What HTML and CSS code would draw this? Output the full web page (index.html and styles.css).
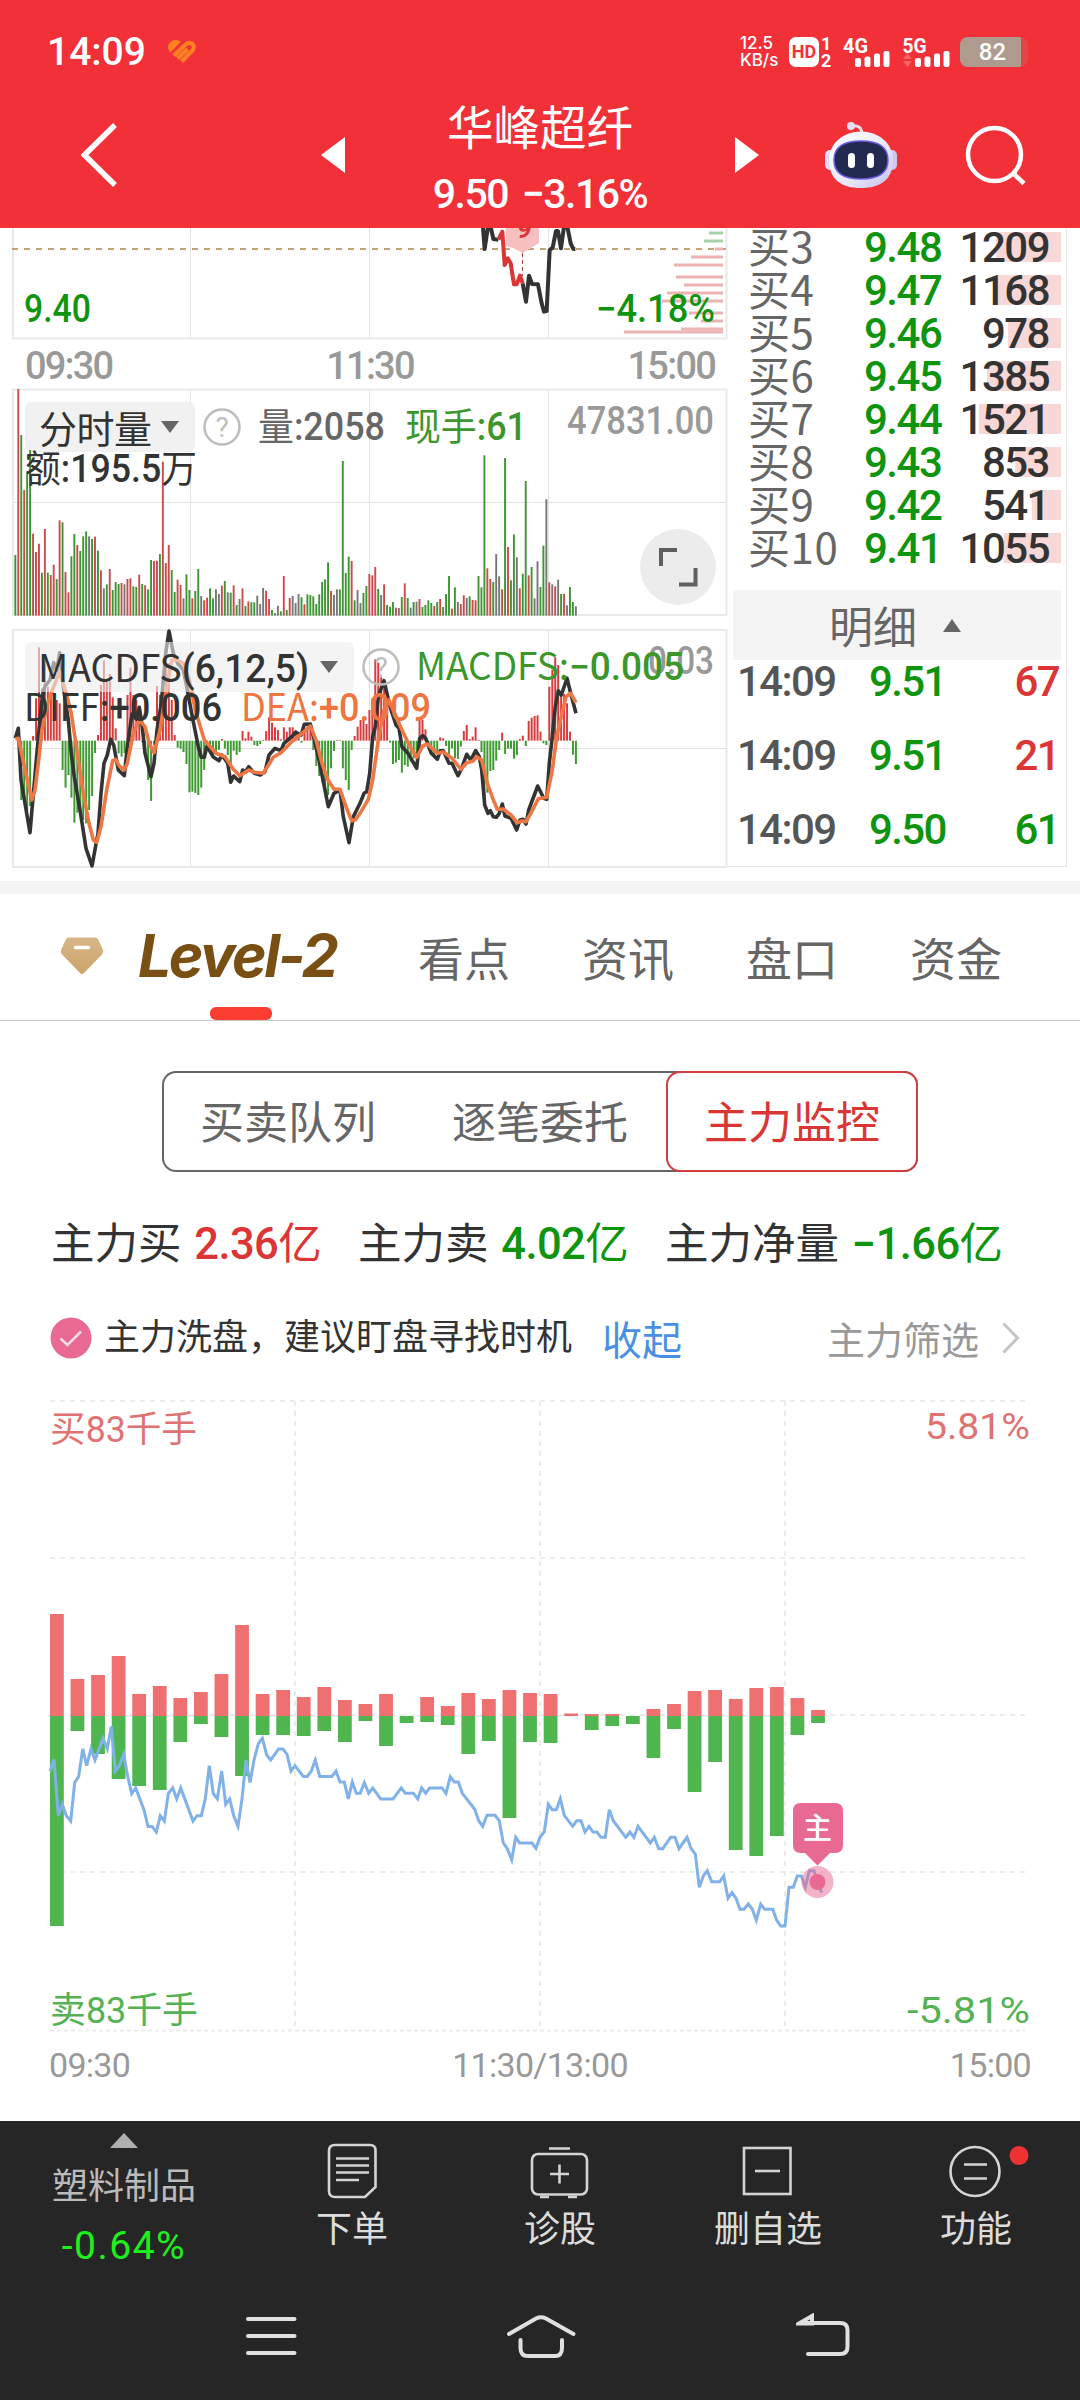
FILE: index.html
```html
<!DOCTYPE html>
<html lang="zh-CN">
<head>
    <meta charset="UTF-8">
    <meta name="viewport" content="width=device-width, initial-scale=1.0">
    <title>华峰超纤</title>
    <link rel="stylesheet" href="styles.css">
</head>
<body>
    <header class="header">
        <div class="status-bar">
            <span class="status-time">14:09</span>
            <svg class="status-heart" width="28" height="24" viewBox="0 0 28 24">
                <path d="M2.500 12.500 Q0 10 0 7 Q1 0 8 0 Q11 0 13 1.500 Z" fill="#ff8222"/>
                <path d="M6 15.500 L17.500 4.500 Q21 1.500 24.500 4 Q27 7 24.500 10.500 L13.500 21.500 M9.500 18.500 L19.500 9" fill="none" stroke="#ff8222" stroke-width="4.200"/>
            </svg>
            <div class="status-right">
                <div class="net-speed">12.5<br>KB/s</div>
                <span class="hd-badge">HD</span>
                <div class="hd-sims">1<br>2</div>
                <svg class="signal" width="50" height="32" viewBox="842 35 50 32">
                    <text x="843" y="51.500" textLength="25" lengthAdjust="spacingAndGlyphs">4G</text>
                    <rect x="855" y="57" width="6" height="9" rx="2"/>
                    <rect x="864.500" y="55.500" width="6" height="10.500" rx="2"/>
                    <rect x="874" y="52.500" width="6" height="13.500" rx="2"/>
                    <rect x="883.500" y="50" width="6" height="16" rx="2"/>
                </svg>
                <svg class="signal" width="50" height="32" viewBox="902 35 50 32">
                    <text x="902.500" y="51.500" textLength="24" lengthAdjust="spacingAndGlyphs">5G</text>
                    <path d="M903 58 h9 l-4.500 -6 z M903 60 h9 l-4.500 6 z" fill-opacity="0.25"/>
                    <rect x="915" y="57" width="6" height="9" rx="2"/>
                    <rect x="924.500" y="55.500" width="6" height="10.500" rx="2"/>
                    <rect x="934" y="52.500" width="6" height="13.500" rx="2"/>
                    <rect x="943.500" y="50" width="6" height="16" rx="2"/>
                </svg>
                <div class="battery"><span class="battery-level">82</span></div>
            </div>
        </div>
        <div class="title-bar">
            <svg class="title-icon icon-back" width="36" height="64" viewBox="81 122 36 64" fill="none" stroke="#fff" stroke-width="5.500">
                <path d="M115 124 L84.500 154 L115 184"/>
            </svg>
            <svg class="title-icon icon-prev" width="24" height="36" viewBox="0 0 24 36"><path d="M24 0 V36 L0 18 Z" fill="#fff"/></svg>
            <div class="title-text">
                <div class="stock-name">华峰超纤</div>
                <div class="stock-price">9.50 −3.16%</div>
            </div>
            <svg class="title-icon" width="24" height="36" viewBox="0 0 24 36"><path d="M0 0 V36 L24 18 Z" fill="#fff"/></svg>
            <svg class="title-icon icon-robot" width="72" height="68" viewBox="825 119 72 68">
                <defs>
                    <linearGradient id="shell" x1="0" y1="0" x2="1" y2="1">
                        <stop offset="0" stop-color="#ffffff"/>
                        <stop offset="0.600" stop-color="#e8e8fb"/>
                        <stop offset="1" stop-color="#c3bdea"/>
                    </linearGradient>
                </defs>
                <path d="M851 124 Q862 122 862 133" fill="none" stroke="#f3d9e6" stroke-width="3"/>
                <circle cx="851" cy="124" r="4" fill="#e9def0"/>
                <rect x="825" y="148" width="12" height="20" rx="5" fill="#dcdcf6"/>
                <rect x="885" y="148" width="12" height="20" rx="5" fill="#cfc8ee"/>
                <path d="M861 129.500 C878 129.500 893 141 893 158 C893 178 880 186 861 186 C842 186 829 178 829 158 C829 141 844 129.500 861 129.500 Z" fill="url(#shell)"/>
                <path d="M861 139 C880 139 888 146 888 158 C888 171 878 177 861 177 C844 177 834 171 834 158 C834 146 842 139 861 139 Z" fill="#232a50" stroke="#6a5be0" stroke-width="1.500"/>
                <rect x="848" y="151" width="7" height="15" rx="3.500" fill="#fff"/>
                <rect x="867" y="151" width="7" height="15" rx="3.500" fill="#fff"/>
            </svg>
            <svg class="title-icon icon-search" width="62" height="62" viewBox="964 124 62 62" fill="none" stroke="#fff" stroke-width="4.500">
                <circle cx="994.500" cy="154.500" r="26.500"/>
                <path d="M1013 173 L1024 183.500"/>
            </svg>
        </div>
    </header>

    <section class="quote">
        <div class="charts">
            <svg class="chart" width="728" height="113" viewBox="0 228 728 113">
                <path class="grid-strong" d="M13 228 V338.500 H726.500 V228"/>
                <path class="grid" d="M190.500 228 V338 M369.500 228 V338 M548.500 228 V338"/>
                <path class="avg-line" d="M12 249 H727"/>
                <g id="chips"></g>
                <path d="M505.500 228 V246 L514 248.500 L522.500 253 L530 248.500 L539 243 V228 Z" fill="#f7c0c0"/>
                <text class="flag" x="517" y="238">9</text>
                <path d="M522.500 253 V276" stroke="#b04040" stroke-dasharray="4 3"/>
                <g class="price-line" transform="translate(360 225) scale(0.33333)">
                    <polyline points="368,-5 374,72 384,5 392,5 400,42 415,44"/>
                    <polyline points="488,175 498,230 507,152 516,177 534,178 545,235 552,260 560,258 569,75 578,68 588,18 594,18 603,70 612,5 622,5 632,55 640,72 646,72"/>
                    <polyline class="price-red" points="415,44 427,20 434,120 443,100 452,115 462,178 470,178 480,152 488,175"/>
                </g>
                <text class="num green" x="24" y="322" textLength="67" lengthAdjust="spacingAndGlyphs">9.40</text>
                <text class="num green" x="596" y="322" textLength="119" lengthAdjust="spacingAndGlyphs">−4.18%</text>
            </svg>
            <div class="time-axis">
                <span>09:30</span>
                <span>11:30</span>
                <span>15:00</span>
            </div>
            <svg class="chart" width="728" height="234" viewBox="0 386 728 234">
                <path class="grid-strong" d="M13 389.500 H726.500 V615 H13 Z"/>
                <path class="grid" d="M190.500 390 V615 M369.500 390 V615 M548.500 390 V615 M13 502.500 H726"/>
                <rect class="selector" x="25" y="402" width="170" height="50" rx="6"/>
                <g id="volume"></g>
                <text class="cjk dark" x="39" y="443" textLength="113">分时量</text>
                <path class="caret" d="M161 421 H179 L170 433 Z"/>
                <circle class="help" cx="222" cy="427" r="17.500"/>
                <text class="help-mark" x="222" y="437">?</text>
                <text class="cjk gray" x="258" y="440" textLength="127" lengthAdjust="spacingAndGlyphs">量<tspan class="num">:2058</tspan></text>
                <text class="cjk leaf" x="405" y="440" textLength="122" lengthAdjust="spacingAndGlyphs">现手<tspan class="num">:61</tspan></text>
                <text class="num muted" x="567" y="434" textLength="147" lengthAdjust="spacingAndGlyphs">47831.00</text>
                <text class="cjk dark" x="25" y="482" textLength="172" lengthAdjust="spacingAndGlyphs">额<tspan class="num">:195.5</tspan>万</text>
                <circle cx="678" cy="567" r="38" fill="#ececec"/>
                <path d="M677 550 H661 V566 M679 584.500 H695.500 V568" fill="none" stroke="#5f5f5f" stroke-width="4"/>
            </svg>
            <svg class="chart" width="728" height="261" viewBox="0 620 728 261">
                <path class="grid-strong" d="M13 630 H726.500 V867 H13 Z"/>
                <path class="grid" d="M190.500 630 V867 M369.500 630 V867 M548.500 630 V867 M13 748.500 H726"/>
                <g id="macd"></g>
                <polyline id="diff" class="diff-line"/>
                <polyline id="dea" class="dea-line"/>
                <rect class="selector selector-over" x="25" y="642" width="329" height="50" rx="6"/>
                <text class="cjk dark" x="38" y="682" textLength="271" lengthAdjust="spacingAndGlyphs">MACDFS<tspan class="num">(6,12,5)</tspan></text>
                <path class="caret" d="M320 661 H338 L329 673 Z"/>
                <circle class="help" cx="381" cy="667" r="17.500"/>
                <text class="help-mark" x="381" y="677">?</text>
                <text class="num muted" x="648" y="674" textLength="66" lengthAdjust="spacingAndGlyphs">0.03</text>
                <text class="cjk leaf" x="416" y="680" textLength="268" lengthAdjust="spacingAndGlyphs">MACDFS:<tspan class="num">−0.005</tspan></text>
                <text class="cjk dark" x="24" y="721" textLength="198" lengthAdjust="spacingAndGlyphs">DIFF:<tspan class="num">+0.006</tspan></text>
                <text class="cjk orange" x="241" y="721" textLength="190" lengthAdjust="spacingAndGlyphs">DEA:<tspan class="num">+0.009</tspan></text>
            </svg>
        </div>

        <aside class="book">
            <div class="book-rows">
                <div class="book-row"><span class="level">买3</span><span class="price">9.48</span><span class="qty"><i class="depth" style="width: 65px"></i><b>1209</b></span></div>
                <div class="book-row"><span class="level">买4</span><span class="price">9.47</span><span class="qty"><i class="depth" style="width: 63px"></i><b>1168</b></span></div>
                <div class="book-row"><span class="level">买5</span><span class="price">9.46</span><span class="qty"><i class="depth" style="width: 53px"></i><b>978</b></span></div>
                <div class="book-row"><span class="level">买6</span><span class="price">9.45</span><span class="qty"><i class="depth" style="width: 74px"></i><b>1385</b></span></div>
                <div class="book-row"><span class="level">买7</span><span class="price">9.44</span><span class="qty"><i class="depth" style="width: 82px"></i><b>1521</b></span></div>
                <div class="book-row"><span class="level">买8</span><span class="price">9.43</span><span class="qty"><i class="depth" style="width: 46px"></i><b>853</b></span></div>
                <div class="book-row"><span class="level">买9</span><span class="price">9.42</span><span class="qty"><i class="depth" style="width: 29px"></i><b>541</b></span></div>
                <div class="book-row"><span class="level">买10</span><span class="price">9.41</span><span class="qty"><i class="depth" style="width: 57px"></i><b>1055</b></span></div>
            </div>
            <div class="detail-head">
                <span>明细</span>
                <svg width="18" height="13" viewBox="0 0 18 13"><path d="M9 0 L18 13 H0 Z" fill="#666"/></svg>
            </div>
            <div class="trades">
                <div class="trade"><span class="trade-time">14:09</span><span class="trade-price">9.51</span><span class="trade-qty up">67</span></div>
                <div class="trade"><span class="trade-time">14:09</span><span class="trade-price">9.51</span><span class="trade-qty up">21</span></div>
                <div class="trade"><span class="trade-time">14:09</span><span class="trade-price">9.50</span><span class="trade-qty down">61</span></div>
            </div>
        </aside>
    </section>

    <nav class="tabs">
        <svg class="gem" width="44" height="38" viewBox="0 0 44 38">
            <defs>
                <linearGradient id="gold" x1="0" y1="0" x2="0" y2="1">
                    <stop offset="0" stop-color="#d6b689"/>
                    <stop offset="1" stop-color="#cda469"/>
                </linearGradient>
            </defs>
            <path d="M9 0.500 H35 Q37 0.500 38 2 L42.500 12 Q44 15 42 17.500 L24 36 Q22 38 20 36 L2 17.500 Q0 15 1.500 12 L6 2 Q7 0.500 9 0.500 Z" fill="url(#gold)"/>
            <path d="M15.500 10.500 H28.500" stroke="#fff" stroke-width="3.500" stroke-linecap="round"/>
        </svg>
        <div class="tab tab-level2">Level-2</div>
        <div class="tab">看点</div>
        <div class="tab">资讯</div>
        <div class="tab">盘口</div>
        <div class="tab">资金</div>
    </nav>

    <main class="monitor">
        <div class="segments">
            <button class="segment">买卖队列</button>
            <button class="segment">逐笔委托</button>
            <button class="segment active">主力监控</button>
        </div>

        <div class="totals">
            <span class="total">主力买 <b class="up">2.36<em>亿</em></b></span>
            <span class="total">主力卖 <b class="down">4.02<em>亿</em></b></span>
            <span class="total">主力净量 <b class="down">−1.66<em>亿</em></b></span>
        </div>

        <div class="notice">
            <svg class="notice-icon" width="42" height="42" viewBox="0 0 42 42">
                <circle cx="21" cy="21" r="20.500" fill="#e86a92"/>
                <path d="M10.500 21.500 L17.500 28 L31 14.500" fill="none" stroke="#fbdbe6" stroke-width="2.500"/>
            </svg>
            <span class="notice-text">主力洗盘，建议盯盘寻找时机</span>
            <a class="notice-fold" href="#">收起</a>
            <a class="notice-filter" href="#">主力筛选</a>
            <svg width="18" height="32" viewBox="0 0 18 32" fill="none" stroke="#c4c4c4" stroke-width="3"><path d="M1.500 1.500 L15.500 16 L1.500 30.500"/></svg>
        </div>

        <svg class="flow-chart" width="1080" height="645" viewBox="0 1393 1080 645">
            <path class="flow-grid" d="M50 1401 H1025 M50 1558 H1025 M50 1715 H1025 M50 1872 H1025 M295 1401 V2030 M540 1401 V2030 M785 1401 V2030"/>
            <path class="flow-grid flow-grid-fine" d="M50 2030.500 H1025"/>
            <g id="flow"></g>
            <polyline id="trend" class="trend-line"/>
            <circle cx="817.500" cy="1882" r="16" fill="#e86a92" fill-opacity="0.500"/>
            <circle cx="817.500" cy="1882" r="8" fill="#e86a92"/>
            <path d="M801 1803 H835 Q843 1803 843 1811 V1845 Q843 1853 835 1853 H830 L817.500 1865.500 L805 1853 H801 Q793 1853 793 1845 V1811 Q793 1803 801 1803 Z" fill="#e86a92"/>
            <text class="marker-text" x="817.500" y="1839">主</text>
            <text class="flow-label flow-buy" x="50" y="1442" textLength="147" lengthAdjust="spacingAndGlyphs">买83千手</text>
            <text class="flow-label flow-buy" x="925" y="1439" textLength="105" lengthAdjust="spacingAndGlyphs">5.81%</text>
            <text class="flow-label flow-sell" x="50" y="2023" textLength="148" lengthAdjust="spacingAndGlyphs">卖83千手</text>
            <text class="flow-label flow-sell" x="907" y="2023" textLength="123" lengthAdjust="spacingAndGlyphs">-5.81%</text>
        </svg>
        <div class="flow-axis">
            <span>09:30</span>
            <span>11:30/13:00</span>
            <span>15:00</span>
        </div>
    </main>

    <footer class="footer">
        <div class="toolbar">
            <div class="tool tool-sector">
                <svg width="28" height="15" viewBox="0 0 28 15"><path d="M14 0 L28 15 H0 Z" fill="#b0b0b0"/></svg>
                <span class="sector-name">塑料制品</span>
                <span class="sector-change">-0.64%</span>
            </div>
            <div class="tool">
                <svg class="tool-icon" width="60" height="60" viewBox="322 2141 60 60">
                    <path d="M335 2145 H370 Q375.500 2145 375.500 2150.500 V2187 L365 2197 H335 Q329 2197 329 2191 V2151 Q329 2145 335 2145 Z"/>
                    <path d="M336 2158.500 H369 M336 2165.500 H369 M336 2172.500 H369 M336 2180 H359"/>
                </svg>
                <span>下单</span>
            </div>
            <div class="tool">
                <svg class="tool-icon" width="60" height="60" viewBox="530 2141 60 60">
                    <rect x="532" y="2154" width="55" height="40.500" rx="6"/>
                    <path d="M549 2148.500 H570 M540 2197 H549 M568 2197 H577 M550 2174 H569 M559.500 2164.500 V2183.500"/>
                </svg>
                <span>诊股</span>
            </div>
            <div class="tool">
                <svg class="tool-icon" width="60" height="60" viewBox="738 2141 60 60">
                    <rect x="744" y="2148" width="46.500" height="46"/>
                    <path d="M755 2171 H780"/>
                </svg>
                <span>删自选</span>
            </div>
            <div class="tool">
                <svg class="tool-icon" width="116" height="60" viewBox="918 2141 116 60">
                    <circle cx="975" cy="2171.500" r="24.500"/>
                    <path d="M964 2164.500 H987 M964 2178.500 H987"/>
                    <circle cx="1019" cy="2155.500" r="9.500" fill="#ec3232" stroke="none"/>
                </svg>
                <span>功能</span>
            </div>
        </div>
        <div class="system-nav">
            <svg width="54" height="44" viewBox="244 2315 54 44"><path d="M248 2320 H294.500 M248 2337 H294.500 M248 2354 H294.500"/></svg>
            <svg width="72" height="48" viewBox="505 2312 72 48"><path d="M509 2334 L536 2318.500 Q541 2316 546 2318.500 L573.500 2334 M520.500 2340 V2348 Q520.500 2356 528 2356 H555 Q562 2356 562 2348 V2340"/></svg>
            <svg width="56" height="46" viewBox="796 2313 56 46"><path d="M802 2323 H840 Q847.500 2323 847.500 2330 V2347 Q847.500 2354 840 2354 H808"/><path d="M799 2323.500 L812 2316 V2323.500 Z" fill="#e0e0e0" stroke-width="1"/></svg>
        </div>
    </footer>

    <script src="charts.js"></script>
</body>
</html>
```

FILE: styles.css
```css
* {
    box-sizing: border-box;
}

body {
    width: 1080px;
    height: 2400px;
    margin: 0;
    overflow: hidden;
    background: #fff;
    color: #333;
    font-family: Roboto, 'Noto Sans CJK SC', sans-serif;
}

svg {
    display: block;
    flex: none;
}

a {
    text-decoration: none;
}

.up {
    color: #dc3535;
}

.down {
    color: #0f940f;
}

/* header */
.header {
    height: 228px;
    background: #f13038;
    color: #fff;
}

.status-bar {
    display: flex;
    align-items: center;
    height: 98px;
    padding: 5px 52px 0 47px;
}

.status-time {
    width: 121px;
    font-size: 39px;
    font-weight: 500;
}

.status-right {
    display: flex;
    align-items: center;
    margin-left: auto;
}

.net-speed {
    width: 49px;
    font-family: Inter, sans-serif;
    font-size: 17px;
    font-weight: 500;
    line-height: 17px;
}

.hd-badge {
    width: 30px;
    height: 30px;
    border-radius: 7px;
    background: #fff;
    color: #f13038;
    font-size: 18px;
    font-weight: 700;
    line-height: 30px;
    text-align: center;
}

.hd-sims {
    width: 23px;
    padding-left: 2px;
    font-size: 18px;
    font-weight: 700;
    line-height: 17px;
}

.signal {
    margin-right: 10px;
    overflow: visible;
    fill: #fff;
    font-size: 20px;
    font-weight: 700;
}

.battery {
    width: 68px;
    height: 30px;
    margin-left: -2px;
    border-radius: 8px;
    background: #e2444a;
    overflow: hidden;
}

.battery-level {
    display: block;
    width: 61px;
    background: #ae9b8d;
    font-size: 24px;
    font-weight: 500;
    line-height: 31px;
    text-align: center;
    text-indent: 4px;
}

.title-bar {
    display: flex;
    align-items: center;
    height: 130px;
    padding-left: 81px;
}

.title-icon {
    margin-bottom: 16px;
}

.icon-prev {
    margin-left: 204px;
}

.icon-robot {
    margin-left: 66px;
}

.icon-search {
    margin-left: 67px;
}

.title-text {
    width: 390px;
    text-align: center;
}

.stock-name {
    font-size: 46.5px;
    line-height: 62px;
}

.stock-price {
    font-size: 41px;
    font-weight: 500;
    line-height: 68px;
    letter-spacing: -1.5px;
    word-spacing: 5px;
}

/* quote charts */
.quote {
    display: flex;
    height: 653px;
}

.charts {
    width: 728px;
}

.grid,
.grid-strong {
    fill: none;
    stroke: #e2e2e2;
    stroke-width: 1;
}

.grid-strong {
    stroke: #e9e9e9;
    stroke-width: 2;
}

.avg-line {
    stroke: #c2a478;
    stroke-width: 2;
    stroke-dasharray: 6 6;
}

.price-line polyline {
    fill: none;
    stroke: #333;
    stroke-width: 12;
    stroke-linejoin: round;
}

.price-line .price-red {
    stroke: #dc3535;
}

.flag {
    fill: #dc3535;
    font-size: 26px;
    font-style: italic;
    font-weight: 700;
}

.num {
    font-family: Roboto, sans-serif;
    font-size: 38px;
    font-weight: 500;
}

.cjk {
    font-family: 'Noto Sans CJK SC', sans-serif;
    font-size: 38px;
}

.green {
    fill: #0f940f;
}

.leaf {
    fill: #3c962b;
}

.dark {
    fill: #333;
}

.gray {
    fill: #666;
}

.muted {
    fill: #999;
}

.orange {
    fill: #ed7641;
}

.selector {
    fill: #f1f1f1;
}

.selector-over {
    fill: #ececec;
    fill-opacity: 0.6;
}

.caret {
    fill: #666;
}

.help {
    fill: none;
    stroke: #bdbdbd;
    stroke-width: 2.5;
}

.help-mark {
    fill: #bdbdbd;
    font-size: 28px;
    text-anchor: middle;
}

.diff-line,
.dea-line {
    fill: none;
    stroke: #333;
    stroke-width: 3.6;
    stroke-linejoin: round;
}

.dea-line {
    stroke: #ee7744;
}

.time-axis {
    display: flex;
    justify-content: space-between;
    height: 45px;
    padding: 3px 13px 0 25px;
    color: #999;
    font-size: 38px;
    font-weight: 500;
    line-height: 45px;
    letter-spacing: -1.8px;
}

/* order book */
.book {
    width: 339px;
    height: 639px;
    padding-left: 5px;
    border-right: 1px solid #e8e8e8;
    border-bottom: 1px solid #e8e8e8;
}

.book-rows {
    height: 362px;
    margin-top: -3px;
    padding-top: 1px;
}

.book-row {
    display: flex;
    align-items: center;
    height: 43.1px;
    padding: 0 5px 0 15px;
    font-size: 42px;
    line-height: 42px;
}

.level {
    width: 116px;
    margin-top: -6px;
    color: #666;
    font-family: 'Noto Sans CJK SC', sans-serif;
    font-size: 42px;
    letter-spacing: 0.6px;
}

.price {
    width: 90px;
    color: #0f940f;
    font-weight: 500;
    letter-spacing: -1.5px;
}

.qty {
    position: relative;
    flex: 1;
    padding-right: 12px;
    text-align: right;
}

.qty b {
    position: relative;
    font-weight: 500;
    letter-spacing: -1.5px;
}

/* depth bar behind the quantity */
.depth {
    position: absolute;
    top: 5px;
    right: 0;
    height: 30px;
    background: #f8d7d7;
}

.detail-head {
    display: flex;
    align-items: center;
    gap: 26px;
    width: 328px;
    height: 70px;
    margin-top: 3px;
    padding-left: 96px;
    background: #f4f4f4;
    color: #666;
    font-size: 44px;
}

.trade {
    display: flex;
    align-items: flex-start;
    height: 74px;
    padding: 0 7px 0 4px;
    font-size: 42px;
    font-weight: 500;
    line-height: 43px;
    letter-spacing: -1.6px;
}

.trade-time {
    width: 132px;
    color: #555;
}

.trade-price {
    color: #0f940f;
}

.trade-qty {
    margin-left: auto;
}

/* tabs */
.tabs {
    display: flex;
    align-items: center;
    height: 140px;
    padding: 11px 0 14px 60px;
    border-top: 13px solid #f4f4f4;
    border-bottom: 1px solid #c8c8c8;
    color: #666;
    font-size: 46px;
}

.tabs .tab {
    margin-right: 72px;
}

.tabs .tab-level2 {
    position: relative;
    width: 208px;
    margin-left: 34px;
    color: #7a4f14;
    font-family: Inter, sans-serif;
    font-size: 59px;
    font-style: italic;
    font-weight: 700;
    line-height: 72px;
    letter-spacing: -2.5px;
}

.tab-level2::after {
    content: '';
    position: absolute;
    bottom: -28px;
    left: 72px;
    width: 62px;
    height: 13px;
    border-radius: 6px;
    background: #fc3d32;
}

/* main force monitor */
.segments {
    display: flex;
    width: 756px;
    height: 101px;
    margin: 50px auto 0;
    border-radius: 14px;
    box-shadow: inset 0 0 0 2px #666;
}

.segment {
    flex: none;
    width: 252px;
    padding: 0 0 3px;
    border: 0;
    background: none;
    color: #666;
    font: 44px 'Noto Sans CJK SC', sans-serif;
}

.segment.active {
    border: 2px solid #cf3f3f;
    border-radius: 14px;
    background: #fff;
    color: #d93636;
}

.totals {
    display: flex;
    height: 146px;
    padding-left: 51px;
    font-size: 43.5px;
    line-height: 146px;
    white-space: nowrap;
}

.total {
    width: 307px;
}

.total b {
    margin-left: 2px;
    font-weight: 500;
    letter-spacing: -0.6px;
}

.total em {
    font-style: normal;
    font-weight: 400;
}

.notice {
    display: flex;
    align-items: center;
    height: 39px;
    margin-bottom: 36px;
    padding-left: 50px;
}

.notice-text {
    margin: 0 30px 7px 12px;
    font-size: 36px;
}

.notice-fold {
    color: #4a90e2;
    font-size: 40px;
}

.notice-filter {
    margin: 0 23px 0 auto;
    color: #999;
    font-size: 38px;
}

.notice > svg:last-child {
    margin-right: 60px;
}

.flow-grid {
    fill: none;
    stroke: #ececec;
    stroke-width: 2;
    stroke-dasharray: 5 5;
}

.flow-grid-fine {
    stroke-dasharray: 4 3;
}

.trend-line {
    fill: none;
    stroke: #80b1e8;
    stroke-width: 3;
}

.marker-text {
    fill: #fff;
    font-size: 29px;
    font-weight: 500;
    text-anchor: middle;
}

.flow-label {
    font-size: 36px;
}

.flow-buy {
    fill: #e07272;
}

.flow-sell {
    fill: #54b254;
}

.flow-axis {
    display: grid;
    grid-template-columns: 1fr 2fr 1fr;
    height: 83px;
    padding: 0 49px;
    color: #999;
    font-size: 34px;
    line-height: 55px;
    letter-spacing: -0.7px;
    text-align: center;
}

.flow-axis span:first-child {
    text-align: left;
}

.flow-axis span:last-child {
    text-align: right;
}

/* footer */
.footer {
    height: 279px;
    background: #262626;
    color: #dcdcdc;
}

.toolbar {
    display: flex;
    height: 180px;
}

.tool {
    display: flex;
    flex-direction: column;
    align-items: center;
    width: 208px;
    padding-top: 20px;
    font-size: 36px;
    line-height: 58px;
}

.tool-icon {
    fill: none;
    stroke: #d4d4d4;
    stroke-width: 2.6;
}

.tool-sector {
    width: 248px;
    padding-top: 12px;
    line-height: 54px;
}

.sector-name {
    margin-top: 12px;
    color: #bbb;
}

.sector-change {
    margin-top: 5px;
    color: #1ef01e;
    font-size: 39px;
    letter-spacing: 1.5px;
}

.system-nav {
    display: flex;
    align-items: center;
    gap: 207px;
    height: 70px;
    padding-left: 244px;
}

.system-nav svg:last-child {
    margin-left: 12px;
}

.system-nav path {
    fill: none;
    stroke: #e0e0e0;
    stroke-width: 4;
    stroke-linecap: round;
}
```

FILE: charts.js
```js
const SVG_NS = 'http://www.w3.org/2000/svg';
const COLORS = { r: '#cb4a4a', g: '#3c9632', k: '#777' };

function addRect(parent, x, y, width, height, fill) {
    const rect = document.createElementNS(SVG_NS, 'rect');
    rect.setAttribute('x', x);
    rect.setAttribute('y', y);
    rect.setAttribute('width', width);
    rect.setAttribute('height', height);
    rect.setAttribute('fill', fill);
    parent.appendChild(rect);
}

// chip distribution: y, left edge
const chips = document.getElementById('chips');
[[233, 709], [241, 704], [249, 715], [257, 691], [265, 674], [277, 676], [285, 684],
 [293, 667], [301, 662], [313, 689], [321, 701], [329, 681], [332, 624]].forEach(([y, x], i) => {
    addRect(chips, x, y - 1.5, 723 - x, 3, i < 2 ? '#a5d3a5' : '#edb2b2');
});

// one bar per minute, tops in thirds of a pixel
const volume = `990g 492r 630g 795r 740g 675g 926r 981r 956r 1043g 912r 1043g 1050r 1019r 1062g 886r 892g 1041r 1102r 994g
927g 960r 978g 934g 919g 934k 942g 935r 977g 1036r 1090k 1078g 1032r 1095g 1071g 1077g 1074r 1078k 1062r 1060r
1084g 1086g 1049r 1077g 1081r 1093g 1005g 1008r 1007r 987g 710r 1014r 960r 1035g 1101g 1064r 1080r 1120k 1048g 1095g
1120r 1098g 1032g 1113k 1126r 1118r 1090g 1120g 1093k 1107k 1082r 1068g 1102k 1103g 1081r 1140g 1122k 1090r 1143g 1129r
1132g 1132g 1112k 1137k 1089k 1097r 1122r 1155g 1164k 1142k 1159g 1053r 1155g 1119r 1113k 1134k 1107k 1117g 1138r 1108g
1110g 1114g 1137g 1108g 1071g 1063g 1012g 1098r 1110k 1093k 1093g 708g 1044g 995g 1008r 1126g 1095k 1134k 1104g 1083g
1047r 1051r 1026r 1092g 1110k 1078r 1140g 1145g 1131g 1148r 1149k 1116g 1075r 1119g 1148k 1131g 1130k 1122r 1146g 1140g
1126g 1134g 1143r 1131g 1122r 1146g 1107g 1053g 1151r 1087g 1131k 1137r 1111r 1119k 1114g 1125r 1126r 1053g 1087g 691g
1030r 1062r 1071g 987k 1054k 1093r 699g 966r 1066g 928g 997k 1090r 1046g 768g 1051r 1026g 1120k 1009k 1086g 962g
823k 1072r 1078k 1084r 1064k 1107g 1107r 1141k 1086g 1131g 1144k`;

const volumeGroup = document.getElementById('volume');
volume.split(/\s+/).forEach((item, i) => {
    const top = 225 + parseInt(item, 10) / 3;
    addRect(volumeGroup, 14.4 + i * 2.95, top, 1.9, 615.6 - top, COLORS[item.slice(-1)]);
});

// histogram ends, below 362 is a red bar and above it a green one
const macd = [362, 355, 540, 540, 572, 558, 348, 235, 82, 205, 120, 200, 218, 225, 240, 250, 450, 503, 465, 533,
    608, 578, 578, 600, 610, 570, 528, 399, 345, 195, 122, 185, 162, 232, 325, 400, 410, 399, 225, 143,
    225, 240, 300, 366, 399, 480, 543, 375, 198, 225, 185, 140, 130, 240, 345, 383, 386, 396, 432, 517,
    515, 519, 525, 503, 450, 385, 400, 412, 405, 390, 357, 386, 405, 435, 392, 405, 396, 333, 355, 335,
    350, 375, 378, 372, 360, 333, 292, 308, 322, 330, 358, 322, 335, 322, 322, 330, 338, 368, 330, 320,
    320, 390, 438, 468, 485, 515, 525, 445, 393, 360, 360, 445, 480, 510, 390, 348, 320, 300, 292, 312,
    270, 235, 118, 128, 172, 190, 255, 368, 432, 428, 420, 458, 435, 440, 425, 415, 410, 292, 300, 328,
    375, 400, 405, 400, 352, 355, 378, 402, 385, 415, 417, 380, 333, 315, 357, 350, 322, 360, 396, 545,
    518, 453, 450, 422, 390, 338, 402, 386, 386, 416, 405, 357, 347, 378, 303, 293, 288, 286, 335, 370,
    375, 200, 150, 112, 135, 225, 222, 250, 335, 404, 432];

const macdGroup = document.getElementById('macd');
macd.forEach((v, i) => {
    const red = v < 362;
    const y = 620 + Math.min(v, 362) / 3;
    addRect(macdGroup, 14.4 + i * 2.95, y, 2, Math.abs(v - 362) / 3, red ? '#d83c3c' : '#3f9a32');
});

function drawLine(id, parts) {
    const points = [];
    parts.forEach(({ x, y, sx = 3, sy = 3, data }) => {
        data.trim().split(/\s+/).forEach(pair => {
            const [px, py] = pair.split(',').map(Number);
            points.push((x + px / sx).toFixed(1) + ',' + (y + py / sy).toFixed(1));
        });
    });
    document.getElementById(id).setAttribute('points', points.join(' '));
}

drawLine('diff', [
    { x: 0, y: 620, data: `46,355 55,325 63,480 90,638 108,430 117,330 126,240 134,200 150,180 161,128 170,150 179,98 190,200
    205,300 214,400 223,470 240,570 258,685 276,738 294,640 303,520 312,430 322,405 332,358 341,375 355,450 373,467 382,380
    396,282 409,297 418,262 427,320 435,400 453,470 462,430 471,330 484,250 497,100 507,33 520,100 533,130 550,150 560,200
    577,290 595,380 604,412 613,412 621,378 639,410 657,422 666,405 683,430 692,487 701,468 719,485 728,450 737,455 746,440
    763,460 781,465 795,455 807,405 825,385 843,392 852,370 875,350 887,337 904,345 913,313 931,312 943,360 957,420 985,560
    1002,520 1020,510 1030,590 1047,668 1060,590` },
    { x: 360, y: 620, data: `0,550 12,520 20,515 29,460 38,350 46,320 55,230 72,182 90,260 108,315 117,325 126,380 144,400
    170,445 179,355 188,347 197,355 214,400 232,418 241,392 250,392 267,430 276,430 294,467 303,450 320,403 332,420 347,392
    358,410 365,450 374,555 384,580 391,572 400,590 409,592 418,580 427,552 435,588 453,595 470,630 480,600 489,598 498,612
    506,570 533,498 551,535 560,538 568,430 577,350 586,260 595,212 604,225 621,175 632,220 648,280` }
]);

drawLine('dea', [
    { x: 0, y: 620, data: `46,357 55,355 95,540 105,510 115,430 126,330 143,250 161,200 179,155 196,210 214,280 232,400
    250,520 267,610 280,660 290,667 303,620 320,510 338,422 347,418 358,438 373,450 382,430 400,340 418,300 435,320 448,370
    462,398 480,330 497,220 515,120 533,120 550,130 568,180 586,270 613,360 648,400 675,410 700,448 719,467 746,450 763,457
    790,460 820,412 843,398 875,365 904,342 931,318 948,360 966,430 984,480 1002,508 1020,508 1038,560 1055,602 1066,600` },
    { x: 360, y: 620, data: `0,580 25,538 38,480 55,360 72,270 86,240 108,290 126,330 150,380 170,412 188,378 202,372
    232,400 250,396 276,415 303,448 320,428 338,424 350,410 365,420 382,490 400,540 412,568 430,567 453,585 472,608 485,603
    498,605 515,575 535,536 560,532 577,450 590,350 604,290 618,230 632,220 648,248` }
]);

// main force orders, [buy, sell] per five minutes
const flow = [[102, 210], [37, 15], [41, 38], [60, 63], [22, 70], [30, 74], [18, 26], [24, 8], [42, 21], [91, 60],
    [22, 19], [26, 19], [19, 20], [29, 15], [16, 26], [12, 5], [22, 30], [0, 7], [19, 6], [10, 9],
    [23, 38], [17, 25], [26, 102], [23, 26], [22, 27], [2.5, 0], [2, 14], [2, 10], [0, 8], [7, 42],
    [12, 13], [25, 76], [26, 46], [17, 134], [28, 140], [29, 120], [18, 19], [6, 7]];

const flowGroup = document.getElementById('flow');
flow.forEach(([buy, sell], i) => {
    const x = 50 + i * 20.57;
    addRect(flowGroup, x, 1716 - buy, 13.8, buy, '#ef7070');
    addRect(flowGroup, x, 1716, 13.8, sell, '#4fb64f');
});

drawLine('trend', [
    { x: 30, y: 1380, sy: 2.8, data: `60,1095 72,1063 85,1220 97,1188 109,1220 122,1235 134,1127 146,1110 158,1033 170,1080
    183,1033 195,1064 219,1003 232,1033 244,970 256,1095 268,1080 281,1048 293,1110 305,1158 317,1142 342,1204 354,1250
    366,1250 379,1266 391,1220 403,1235 415,1158 428,1142 440,1173 452,1142 489,1235 501,1220 514,1220 526,1173 538,1080
    550,1158 562,1173 575,1095 587,1188 599,1173 611,1220 624,1250 636,1173 648,1064 660,1127 672,1064 685,1018 697,1003
    710,1050 722,1064 746,1033 759,1033 771,1048 783,1095 795,1080 820,1110 832,1110 844,1095 856,1064 869,1110 906,1110
    918,1095 930,1126 943,1126 955,1173 967,1126 979,1157 991,1157 1003,1127 1016,1157 1028,1142 1052,1173 1089,1173
    1114,1142 1126,1157 1150,1157 1163,1173 1175,1142 1187,1157 1199,1142 1225,1142` },
    { x: 440, y: 1560, data: `5,683 18,700 31,650 43,666 55,666 67,700 104,748 116,782 128,799 141,766 165,766 178,782
    190,849 202,866 215,899 227,832 239,849 276,849 288,865 300,832 313,815 325,733 337,749 349,749 361,716 373,766 398,799
    410,782 423,782 435,816 447,799 459,816 471,816 483,832 496,832 508,749 520,782 557,832 570,816 582,832 594,799 631,849
    643,832 656,866 668,866 692,832 705,832 717,866 741,832 753,865 766,882 778,982 790,948 802,932 815,965 839,965 851,948
    864,1015 876,998 888,1015 900,1048 912,1048 925,1032 937,1048 949,1081 962,1032 974,1048 998,1048 1010,1081 1022,1098
    1035,1098 1047,982 1060,982 1072,948 1084,948 1096,982 1108,932 1122,932 1133,965 1145,998` }
]);
```
